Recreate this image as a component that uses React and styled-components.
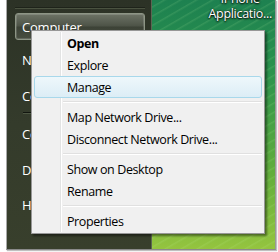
import React from 'react';
import styled, { createGlobalStyle } from 'styled-components';

const GlobalStyle = createGlobalStyle`
  html, body {
    margin: 0;
    padding: 0;
    background: #fff;
  }
  body {
    font-family: "Open Sans", "Noto Sans", "DejaVu Sans", sans-serif;
  }
`;

const Frame = styled.div`
  width: 278px;
  height: 252px;
  background: #fff;
  box-sizing: border-box;
  padding: 0 2px 2px 6px;
  position: relative;
  overflow: hidden;
`;

const Shot = styled.div`
  display: flex;
  height: 249px;
  border-left: 1px solid #a8a8a8;
  border-right: 1px solid #9a9a9a;
  border-bottom: 1px solid #8a8a8a;
  box-shadow: 1px 1px 1px rgba(0, 0, 0, 0.25);
`;

const StartPane = styled.div`
  width: 145px;
  flex-shrink: 0;
  background: linear-gradient(180deg, #2c3226 0%, #343b2b 50%, #383f2c 100%);
  border-right: 1px solid #5c6652;
  box-sizing: border-box;
  padding: 7px 0 0 8px;
  display: flex;
  flex-direction: column;
  color: #fff;
  font-size: 13px;
  letter-spacing: -0.2px;
`;

const TopRule = styled.div`
  height: 1px;
  margin-right: 6px;
  background: #1e231a;
  border-bottom: 1px solid #4a5240;
`;

const PaneButton = styled.div`
  height: 27px;
  margin-top: 4px;
  margin-right: 6px;
  box-sizing: border-box;
  border: 1px solid #8d9585;
  border-radius: 3px;
  background: linear-gradient(180deg, #6d7366 0%, #4d5347 48%, #3c4236 52%, #484e41 100%);
  box-shadow: inset 0 0 0 1px rgba(255, 255, 255, 0.15);
  display: flex;
  align-items: center;
  padding-left: 6px;
`;

const PaneItem = styled.div`
  height: ${(p) => p.h || 36}px;
  display: flex;
  align-items: center;
  padding-left: 7px;
`;

const PaneRule = styled.div`
  height: 1px;
  margin: 0 0 0 8px;
  background: #12160f;
  border-bottom: 1px solid #4d5643;
`;

const Desktop = styled.div`
  flex: 1;
  position: relative;
  background:
    repeating-linear-gradient(150deg, rgba(255, 255, 255, 0) 0px, rgba(255, 255, 255, 0) 5px, rgba(200, 255, 170, 0.12) 6px, rgba(255, 255, 255, 0) 8px),
    linear-gradient(180deg, #1d8150 0%, #2c944d 30%, #63ae3c 70%, #94c43f 100%);
  display: flex;
  justify-content: flex-end;
  padding-right: 3px;
`;

const IconLabel = styled.div`
  margin-top: -9px;
  color: #fff;
  font-size: 12.5px;
  letter-spacing: -0.3px;
  line-height: 15px;
  text-align: center;
  text-shadow: 0 1px 2px #000, 0 0 2px #000;
`;

const Menu = styled.div`
  position: absolute;
  left: 31px;
  top: 30px;
  width: 234px;
  box-sizing: border-box;
  background: #f0f0f0;
  border: 1px solid #979797;
  padding: 1px 2px;
  box-shadow: 2px 2px 2px rgba(0, 0, 0, 0.45);
  color: #000;
  font-size: 12.5px;
  letter-spacing: -0.4px;
`;

const Gutter = styled.div`
  position: absolute;
  left: 28px;
  top: 1px;
  bottom: 1px;
  width: 1px;
  background: #e2e3e3;
  border-right: 1px solid #fff;
`;

const Item = styled.div`
  position: relative;
  height: 22px;
  box-sizing: border-box;
  display: flex;
  align-items: center;
  padding-left: 32px;
  font-weight: ${(p) => (p.bold ? 700 : 400)};
  border: 1px solid ${(p) => (p.active ? '#a8d8eb' : 'transparent')};
  border-radius: 3px;
  background: ${(p) => (p.active ? 'linear-gradient(180deg, #eef7fb 0%, #dcedf6 100%)' : 'transparent')};
`;

const Sep = styled.div`
  height: 8px;
  display: flex;
  align-items: center;
  padding-left: 29px;
  &::after {
    content: '';
    flex: 1;
    height: 1px;
    background: #e0e0e0;
    border-bottom: 1px solid #fff;
  }
`;

export default function App() {
  return (
    <>
      <GlobalStyle />
      <Frame>
        <Shot>
          <StartPane>
            <TopRule />
            <PaneButton>Computer</PaneButton>
            <PaneItem h={40}>Network</PaneItem>
            <PaneItem h={32}>Connect To</PaneItem>
            <PaneRule />
            <PaneItem h={40}>Control Panel</PaneItem>
            <PaneItem h={32}>Default Programs</PaneItem>
            <PaneItem h={38}>Help and Support</PaneItem>
          </StartPane>
          <Desktop>
            <IconLabel>
              iPhone
              <br />
              Applicatio...
            </IconLabel>
          </Desktop>
        </Shot>
        <Menu>
          <Gutter />
          <Item bold>Open</Item>
          <Item>Explore</Item>
          <Item active>Manage</Item>
          <Sep />
          <Item>Map Network Drive...</Item>
          <Item>Disconnect Network Drive...</Item>
          <Sep />
          <Item>Show on Desktop</Item>
          <Item>Rename</Item>
          <Sep />
          <Item>Properties</Item>
        </Menu>
      </Frame>
    </>
  );
}
